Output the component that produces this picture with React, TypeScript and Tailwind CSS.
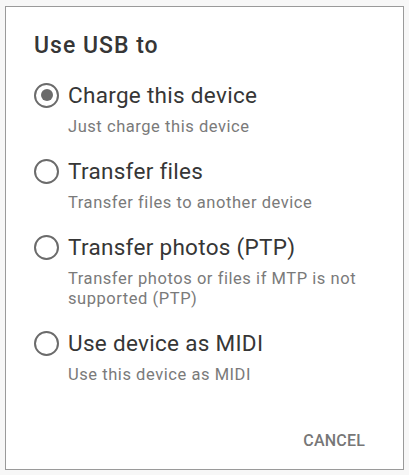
import React from 'react';

interface UsbOption {
  title: string;
  summary: string;
}

const options: UsbOption[] = [
  { title: 'Charge this device', summary: 'Just charge this device' },
  { title: 'Transfer files', summary: 'Transfer files to another device' },
  { title: 'Transfer photos (PTP)', summary: 'Transfer photos or files if MTP is not supported (PTP)' },
  { title: 'Use device as MIDI', summary: 'Use this device as MIDI' },
];

const Radio = ({ checked }: { checked: boolean }) => {
  return (
    <div className="w-[25px] h-[25px] rounded-full border-[2.5px] border-[#6b6b6b] flex items-center justify-center shrink-0">
      {checked ? <div className="w-[12px] h-[12px] rounded-full bg-[#6b6b6b]" /> : null}
    </div>
  );
};

const Option = ({ title, summary, checked }: UsbOption & { checked: boolean }) => {
  return (
    <div className="flex flex-col">
      <div className="flex items-center h-[32px] gap-[9px]">
        <Radio checked={checked} />
        <span className="text-[22.5px] leading-[32px] tracking-[0.3px] text-[#363636]">{title}</span>
      </div>
      <div className="pl-[34px] pr-[24px] mt-[6px] text-[16.5px] leading-[20px] tracking-[0.55px] text-[#7a7a7a]">{summary}</div>
    </div>
  );
};

export default function App() {
  return (
    <div className="w-[409px] h-[475px] bg-[#f7f7f7] pt-[6px] pl-[5px] font-['Roboto',sans-serif]">
      <div className="w-[399px] h-[464px] bg-white border border-[#9a9a9a] flex flex-col pl-[28px]">
        <div className="mt-[25px] text-[23px] leading-[28px] font-medium tracking-[1px] text-[#363636]">Use USB to</div>
        <div className="mt-[19px] flex flex-col gap-[18px]">
          {options.map((o, i) => (
            <Option key={i} {...o} checked={i === 0} />
          ))}
        </div>
        <div className="mt-auto mb-[16px] pr-[38px] flex justify-end">
          <span className="text-[16px] font-medium tracking-[0.2px] text-[#777777]">CANCEL</span>
        </div>
      </div>
    </div>
  );
}
